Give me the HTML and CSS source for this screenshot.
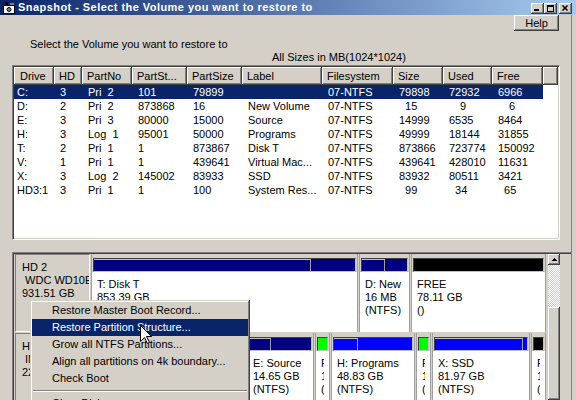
FILE: index.html
```html
<!DOCTYPE html>
<html lang="en">
<head>
    <meta charset="UTF-8">
    <title>Snapshot - Select the Volume you want to restore to</title>
    <link rel="stylesheet" href="styles.css">
</head>
<body>
<div class="window">
    <div class="titlebar">
        <svg class="app-icon" width="14" height="14" viewBox="0 0 14 14">
            <rect x="1.5" y="4.5" width="11" height="8" fill="#fff" stroke="#000"/>
            <rect x="3" y="1" width="3" height="4" fill="#000"/>
            <rect x="8" y="2" width="4" height="2" fill="#808080"/>
            <circle cx="7" cy="8.5" r="2" fill="#808080" stroke="#000"/>
        </svg>
        <span class="title">Snapshot - Select the Volume you want to restore to</span>
        <div class="caption-buttons">
            <span class="cap-btn"><svg width="13" height="11"><rect x="3" y="6" width="5" height="2"/></svg></span>
            <span class="cap-btn"><svg width="13" height="11"><path d="M3 2h7v2H3zM3 2h1v7H3zM9 2h1v7H9zM3 8h7v1H3z"/></svg></span>
            <span class="cap-btn close"><svg width="13" height="11"><path d="M3.5 2.5l5 5M8.5 2.5l-5 5" stroke="#000" stroke-width="1.5"/></svg></span>
        </div>
    </div>

    <div class="client">
        <div class="help-row"><button class="btn">Help</button></div>
        <p class="prompt">Select the Volume you want to restore to</p>
        <p class="units">All Sizes in MB(1024*1024)</p>

        <div class="listview">
            <table>
                <colgroup>
                    <col style="width:40px"><col style="width:28px"><col style="width:50px"><col style="width:55px">
                    <col style="width:55px"><col style="width:80px"><col style="width:71px"><col style="width:50px">
                    <col style="width:49px"><col style="width:51px"><col>
                </colgroup>
                <thead>
                    <tr>
                        <th>Drive</th><th>HD</th><th>PartNo</th><th>PartSt...</th><th>PartSize</th><th>Label</th>
                        <th>Filesystem</th><th>Size</th><th>Used</th><th>Free</th><th></th>
                    </tr>
                </thead>
                <tbody>
                    <tr class="selected">
                        <td>C:</td><td>3</td><td>Pri&nbsp; 2</td><td>101</td><td>79899</td><td></td>
                        <td>07-NTFS</td><td>79898</td><td>72932</td><td>6966</td><td class="filler"></td>
                    </tr>
                    <tr>
                        <td>D:</td><td>2</td><td>Pri&nbsp; 2</td><td>873868</td><td>16</td><td>New Volume</td>
                        <td>07-NTFS</td><td>&nbsp;&nbsp;15</td><td>&ensp;&ensp;9</td><td>&ensp;&ensp;6</td><td></td>
                    </tr>
                    <tr>
                        <td>E:</td><td>3</td><td>Pri&nbsp; 3</td><td>80000</td><td>15000</td><td>Source</td>
                        <td>07-NTFS</td><td>14999</td><td>6535</td><td>8464</td><td></td>
                    </tr>
                    <tr>
                        <td>H:</td><td>3</td><td>Log&nbsp; 1</td><td>95001</td><td>50000</td><td>Programs</td>
                        <td>07-NTFS</td><td>49999</td><td>18144</td><td>31855</td><td></td>
                    </tr>
                    <tr>
                        <td>T:</td><td>2</td><td>Pri&nbsp; 1</td><td>1</td><td>873867</td><td>Disk T</td>
                        <td>07-NTFS</td><td>873866</td><td>723774</td><td>150092</td><td></td>
                    </tr>
                    <tr>
                        <td>V:</td><td>1</td><td>Pri&nbsp; 1</td><td>1</td><td>439641</td><td>Virtual Mac...</td>
                        <td>07-NTFS</td><td>439641</td><td>428010</td><td>11631</td><td></td>
                    </tr>
                    <tr>
                        <td>X:</td><td>3</td><td>Log&nbsp; 2</td><td>145002</td><td>83933</td><td>SSD</td>
                        <td>07-NTFS</td><td>83932</td><td>80511</td><td>3421</td><td></td>
                    </tr>
                    <tr>
                        <td>HD3:1</td><td>3</td><td>Pri&nbsp; 1</td><td>1</td><td>100</td><td>System Res...</td>
                        <td>07-NTFS</td><td>&nbsp;&nbsp;99</td><td>&nbsp;&nbsp;34</td><td>&nbsp;&nbsp;65</td><td></td>
                    </tr>
                </tbody>
            </table>
        </div>

        <div class="disk-panel">
            <div class="disks">
                <div class="disk">
                    <div class="disk-label">
                        <div>HD 2</div>
                        <div>&nbsp;WDC WD10EZEX-00BN5A0</div>
                        <div>931.51 GB</div>
                    </div>
                    <div class="part" style="width:267px">
                        <div class="bar primary"><span class="used" style="width:83%"></span></div>
                        <div class="info"><div>T: Disk T</div><div>853.39 GB</div><div>(NTFS)</div></div>
                    </div>
                    <div class="part" style="width:51px">
                        <div class="bar primary"><span class="used" style="width:52%"></span></div>
                        <div class="info"><div>D: New Volume</div><div>16 MB</div><div>(NTFS)</div></div>
                    </div>
                    <div class="part" style="width:135px">
                        <div class="bar free"></div>
                        <div class="info"><div>FREE</div><div>78.11 GB</div><div>()</div></div>
                    </div>
                </div>
                <div class="disk">
                    <div class="disk-label">
                        <div>HD 3</div>
                        <div>&nbsp;INTEL SSDSC2BW240A4</div>
                        <div>223.57 GB</div>
                    </div>
                    <div class="part" style="width:15px">
                        <div class="bar primary"></div>
                        <div class="info"><div>*: System Reserved</div><div>100 MB</div><div>(NTFS)</div></div>
                    </div>
                    <div class="part" style="width:139px">
                        <div class="bar primary"><span class="used" style="width:91%"></span></div>
                        <div class="info"><div>C:</div><div>78.03 GB</div><div>(NTFS)</div></div>
                    </div>
                    <div class="part" style="width:67px">
                        <div class="bar primary"><span class="used" style="width:35%"></span></div>
                        <div class="info"><div>E: Source</div><div>14.65 GB</div><div>(NTFS)</div></div>
                    </div>
                    <div class="part" style="width:15px">
                        <div class="bar extfree"></div>
                        <div class="info"><div>FREE</div><div>1 MB</div><div>()</div></div>
                    </div>
                    <div class="part" style="width:84px">
                        <div class="bar logical"><span class="used" style="width:31%"></span></div>
                        <div class="info"><div>H: Programs</div><div>48.83 GB</div><div>(NTFS)</div></div>
                    </div>
                    <div class="part" style="width:15px">
                        <div class="bar extfree"></div>
                        <div class="info"><div>FREE</div><div>1 MB</div><div>()</div></div>
                    </div>
                    <div class="part" style="width:98px">
                        <div class="bar logical"><span class="used" style="width:96%"></span></div>
                        <div class="info"><div>X: SSD</div><div>81.97 GB</div><div>(NTFS)</div></div>
                    </div>
                    <div class="part" style="width:15px">
                        <div class="bar free"></div>
                        <div class="info"><div>FREE</div><div>1 MB</div><div>()</div></div>
                    </div>
                </div>
            </div>
            <div class="vscroll">
                <div class="sb-btn"><svg width="5" height="3"><path d="M2 0h1v1h1v1h1v1H0V2h1V1h1z"/></svg></div>
                <div class="sb-track"></div>
                <div class="sb-thumb"></div>
            </div>
        </div>
    </div>

    <div class="context-menu">
        <div class="menu-item">Restore Master Boot Record...</div>
        <div class="menu-item active">Restore Partition Structure...</div>
        <div class="menu-item">Grow all NTFS Partitions...</div>
        <div class="menu-item">Align all partitions on 4k boundary...</div>
        <div class="menu-item">Check Boot</div>
        <div class="menu-sep"></div>
        <div class="menu-item">Clear Disk...</div>
    </div>

    <svg class="cursor" width="12" height="19" viewBox="0 0 12 19">
        <path d="M0.5 0.5V16.5L4.5 12.5L7.5 18.5L9.5 17.5L6.5 11.5H11.5Z" fill="#fff" stroke="#000"/>
    </svg>
</div>
</body>
</html>
```

FILE: styles.css
```css
* {
    box-sizing: border-box;
}
body {
    margin: 0;
    width: 576px;
    height: 400px;
    overflow: hidden;
    background-color: #d4d0c8;
    font-family: "Liberation Sans", Arial, sans-serif;
    font-size: 11px;
    color: #000;
}
.window {
    position: relative;
    height: 400px;
}

/* title bar */
.titlebar {
    height: 15px;
    display: flex;
    align-items: flex-start;
    background: linear-gradient(to right, #0a246a, #a6caf0);
    color: #fff;
}
.app-icon {
    flex: none;
    margin: 1px 2px 0 2px;
}
.title {
    font-weight: bold;
    line-height: 15px;
    letter-spacing: 0.45px;
    white-space: nowrap;
}
.caption-buttons {
    display: flex;
    margin: 3px 4px 0 auto;
}
.cap-btn {
    width: 13px;
    height: 11px;
    display: block;
    background-color: #d4d0c8;
    box-shadow: inset -1px -1px #404040, inset 1px 1px #fff, inset -2px -2px #808080;
}
.cap-btn svg {
    display: block;
}
.cap-btn.close {
    margin-left: 2px;
}

/* client area */
.client {
    width: 572px;
    height: 385px;
    padding-left: 12px;
    border-right: 1px solid #808080;
}
.help-row {
    display: flex;
    justify-content: flex-end;
    padding-right: 12px;
}
.btn {
    width: 45px;
    height: 16px;
    padding: 0;
    border: none;
    background-color: #d4d0c8;
    font-family: inherit;
    font-size: 11px;
    color: #000;
    box-shadow: inset -1px -1px #404040, inset 1px 1px #fff, inset -2px -2px #808080;
}
.prompt {
    margin: 7px 0 0 18px;
    line-height: 13px;
}
.units {
    margin: 0 0 0 260px;
    line-height: 13px;
}

/* list view */
.listview {
    margin-top: 1px;
    width: 548px;
    height: 175px;
    padding: 1px;
    background-color: #fff;
    border: 1px solid;
    border-color: #808080 #fff #fff #808080;
    box-shadow: inset 1px 1px #404040, inset -1px -1px #d4d0c8;
    overflow: hidden;
}
.listview table {
    width: 544px;
    border-collapse: collapse;
    table-layout: fixed;
}
.listview th {
    height: 18px;
    padding: 0 0 0 5px;
    text-align: left;
    font-weight: normal;
    white-space: nowrap;
    overflow: hidden;
    background-color: #d4d0c8;
    box-shadow: inset -1px -1px #404040, inset 1px 1px #fff, inset -2px -2px #808080;
}
.listview th:first-child {
    padding-left: 6px;
}
.listview td {
    height: 14px;
    line-height: 14px;
    padding: 0 0 0 6px;
    white-space: nowrap;
    overflow: hidden;
}
.listview td:first-child {
    padding-left: 3px;
}
.listview tr.selected td {
    background-color: #0a246a;
    color: #fff;
}
.listview tr.selected td.filler {
    background: none;
}

/* disk map */
.disk-panel {
    margin-top: 12px;
    height: 148px;
    display: flex;
    padding-top: 1px;
    border-top: 1px solid #808080;
    border-left: 1px solid #808080;
    box-shadow: inset 1px 1px #404040;
}
.disks {
    flex: none;
    width: 535px;
    padding-left: 2px;
    display: flex;
    flex-direction: column;
    gap: 1px;
}
.disk {
    flex: none;
    height: 78px;
    display: flex;
    gap: 1px;
}
.disk-label {
    flex: none;
    width: 75px;
    padding: 6px 0 0 6px;
    line-height: 13px;
    white-space: nowrap;
    overflow: hidden;
    border: 1px solid;
    border-color: #808080 #fff #fff #808080;
}
.part {
    flex: none;
    display: flex;
    flex-direction: column;
    border-left: 1px solid #a0a0a0;
    border-right: 1px solid #a0a0a0;
}
.bar {
    flex: none;
    height: 14px;
    margin: 4px 1px 0;
    display: flex;
    border: 1px solid;
    border-color: #404040 #c0c0c0 #c0c0c0 #404040;
}
.bar .used {
    height: 100%;
    border-top: 1px solid #c0c0c0;
    border-right: 1px solid #a0a0a0;
}
.bar.primary {
    background-color: #000080;
}
.bar.logical {
    background-color: #0000ff;
}
.bar.free {
    background-color: #000;
}
.bar.extfree {
    background-color: #00ff00;
}
.info {
    flex: 1;
    padding: 6px 5px 0 5px;
    line-height: 13px;
    background-color: #fff;
}
.info div {
    white-space: nowrap;
    overflow: hidden;
}

/* scroll bar */
.vscroll {
    flex: none;
    width: 12px;
    display: flex;
    flex-direction: column;
}
.sb-btn {
    height: 12px;
    display: flex;
    align-items: center;
    justify-content: center;
    background-color: #d4d0c8;
    box-shadow: inset -1px -1px #404040, inset 1px 1px #fff, inset -2px -2px #808080;
}
.sb-btn svg {
    display: block;
}
.sb-track {
    height: 45px;
    background: repeating-conic-gradient(#fff 0 25%, #d4d0c8 0 50%) 0 0 / 2px 2px;
}
.sb-thumb {
    height: 100px;
    background-color: #d4d0c8;
    box-shadow: inset -1px -1px #404040, inset 1px 1px #fff, inset -2px -2px #808080;
}

/* context menu */
.context-menu {
    position: absolute;
    left: 30px;
    top: 300px;
    width: 220px;
    padding: 2px;
    background-color: #d4d0c8;
    box-shadow: inset -1px -1px #404040, inset 1px 1px #d4d0c8, inset -2px -2px #808080, inset 2px 2px #fff;
}
.menu-item {
    height: 17px;
    line-height: 17px;
    padding-left: 20px;
    white-space: nowrap;
}
.menu-item.active {
    background-color: #0a246a;
    color: #fff;
}
.menu-sep {
    margin: 3px 1px;
    border-top: 1px solid #808080;
    border-bottom: 1px solid #fff;
}
.cursor {
    position: absolute;
    left: 140px;
    top: 325px;
}
```
